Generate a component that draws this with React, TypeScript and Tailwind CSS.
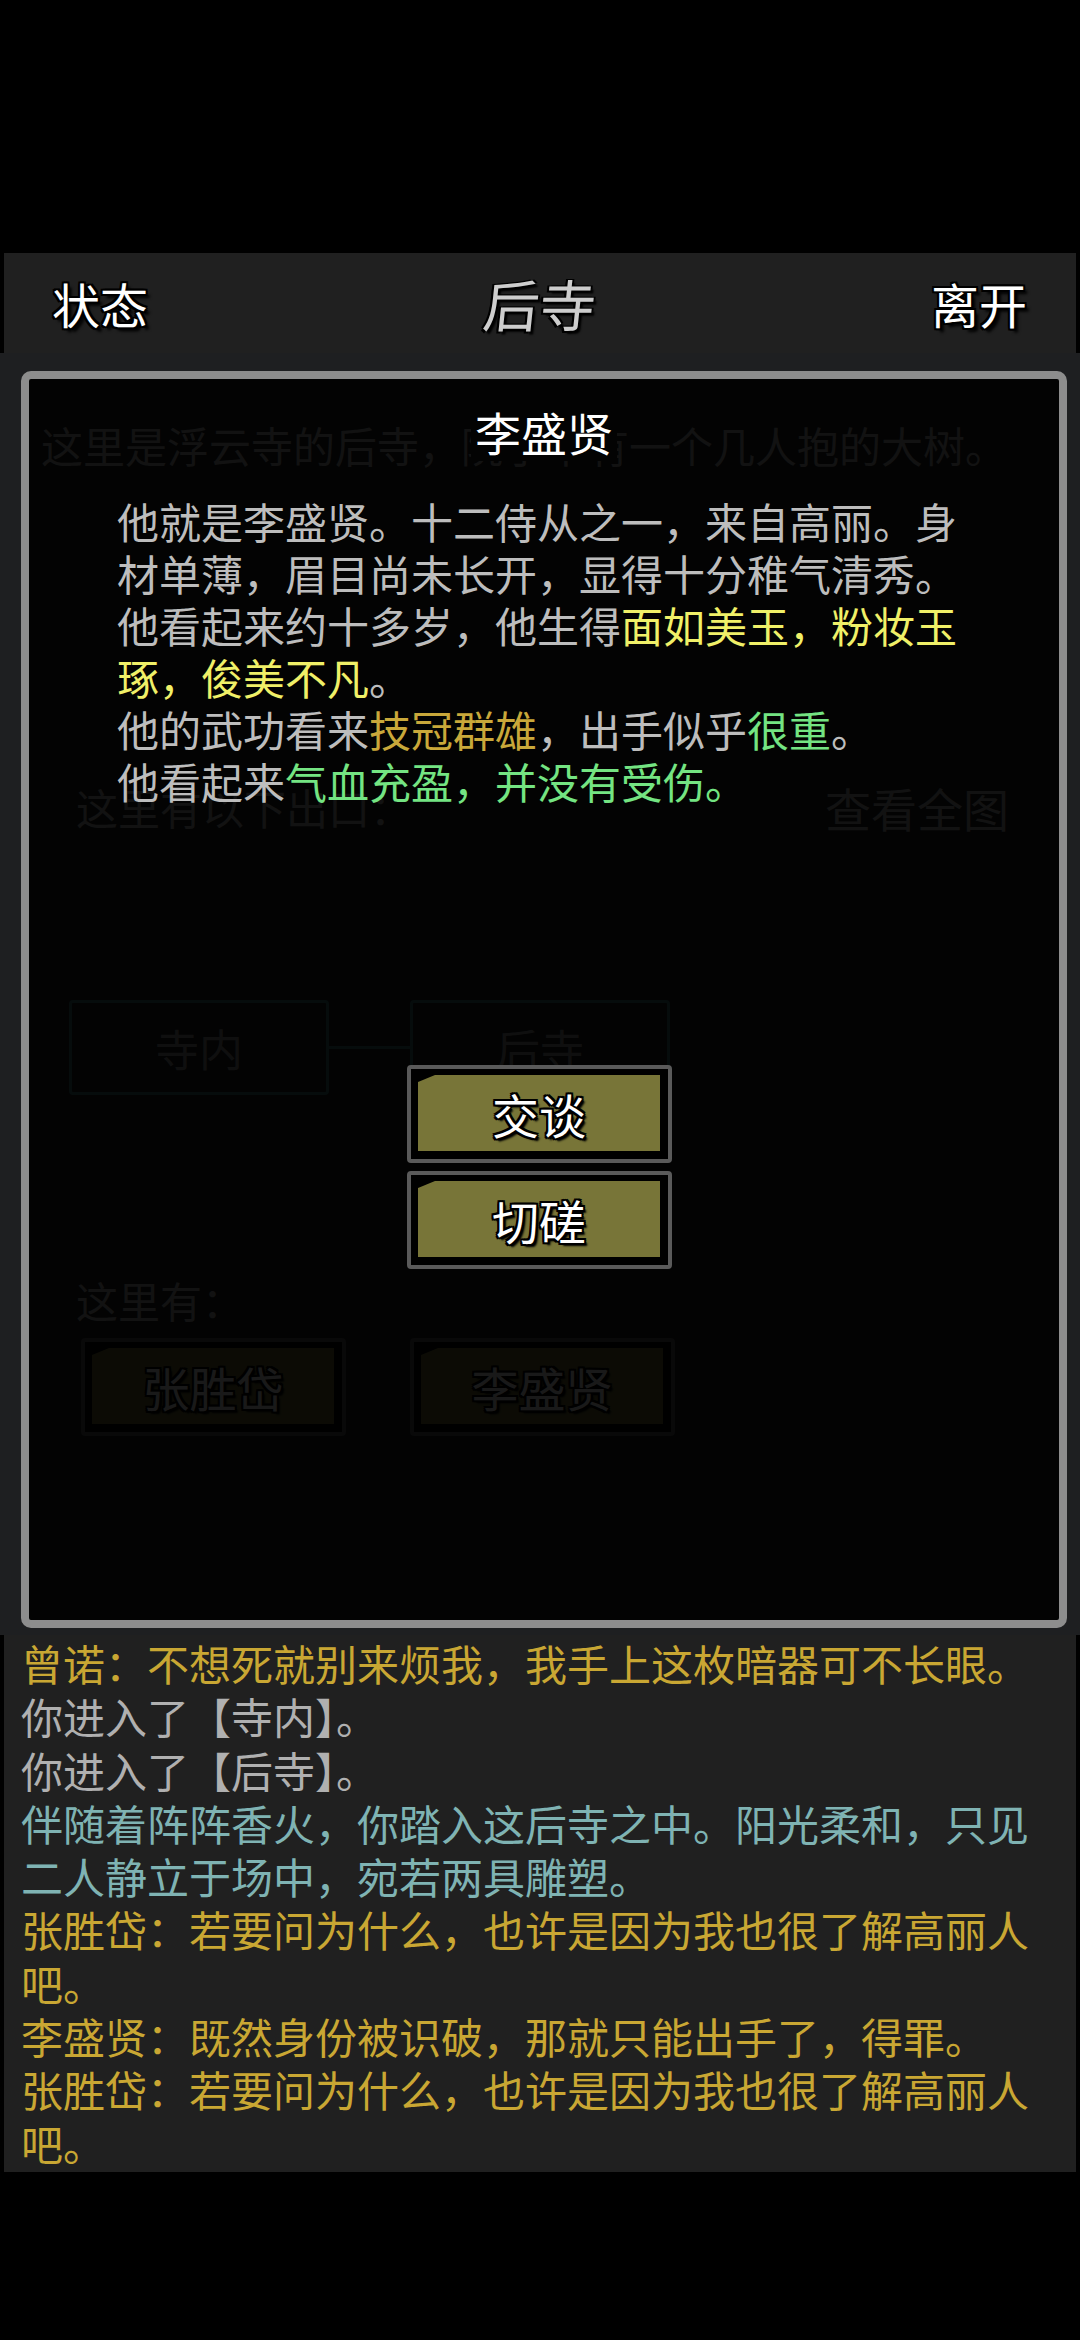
import React from 'react';

const outline =
  '[text-shadow:-2px_-2px_0_#000,2px_-2px_0_#000,-2px_2px_0_#000,2px_2px_0_#000,0_-2px_0_#000,0_2px_0_#000,-2px_0_0_#000,2px_0_0_#000,4px_4px_3px_#000]';

function ActionButton({ label }: { label: string }) {
  return (
    <div className="w-[265px] h-[98px] rounded-[4px] border-[4px] border-[#5a5a5a] bg-black pt-[6px] pl-[7px] pr-[8px] pb-[8px]">
      <div className="w-full h-full bg-[#787538] [clip-path:polygon(17px_0,100%_0,100%_100%,0_100%,0_7px)] flex items-center justify-center">
        <span className="text-[47px] leading-none text-white [text-shadow:-2px_-2px_0_#000,2px_-2px_0_#000,-2px_2px_0_#000,2px_2px_0_#000,0_-2px_0_#000,0_2px_0_#000,-2px_0_0_#000,2px_0_0_#000,3px_3px_2px_#000]">
          {label}
        </span>
      </div>
    </div>
  );
}

function MapNode({ label }: { label: string }) {
  return (
    <div className="w-[260px] h-[95px] border-[3px] border-[#3f7d7d] rounded-[4px] flex items-center justify-center text-[44px] text-[#9a9a9a]">
      {label}
    </div>
  );
}

export default function App() {
  return (
    <div className="w-[1080px] h-[2340px] bg-black flex flex-col font-['Noto_Sans_CJK_SC','Noto_Sans',sans-serif]">
      <div className="h-[253px] shrink-0" />

      {/* Header */}
      <header className="mx-[4px] h-[100px] shrink-0 bg-[#202020] grid grid-cols-3 items-center pl-[48px] pr-[49px]">
        <span className={`justify-self-start text-[48px] leading-none text-white ${outline}`}>状态</span>
        <span className="justify-self-center text-[56px] leading-none text-[#cdcdcd] [text-shadow:-2px_-1px_0_#000,2px_-1px_0_#000,-2px_2px_0_#000,3px_3px_2px_#000] -skew-x-6">
          后寺
        </span>
        <span className={`justify-self-end text-[48px] leading-none text-white ${outline}`}>离开</span>
      </header>

      {/* Room page (under the popup) */}
      <main className="relative h-[1282px] shrink-0 bg-[#1e1f21]">
        <div className="px-[41px] pt-[66px] text-[42px] leading-[52px] text-[#b4b4b4]">
          <p>这里是浮云寺的后寺，院子中有一个几人抱的大树。</p>

          <div className="mt-[310px] flex items-center justify-between pl-[35px] pr-[30px]">
            <span>这里有以下出口：</span>
            <span className="text-[46px]">查看全图</span>
          </div>

          <div className="mt-[167px] ml-[28px] flex items-center">
            <MapNode label="寺内" />
            <div className="w-[81px] h-[3px] bg-[#3f7d7d]" />
            <MapNode label="后寺" />
          </div>

          <p className="mt-[179px] pl-[35px]">这里有：</p>

          <div className="mt-[12px] ml-[40px] flex gap-[64px]">
            <ActionButton label="张胜岱" />
            <ActionButton label="李盛贤" />
          </div>
        </div>

        {/* Popup */}
        <div className="absolute left-[21px] right-[13px] top-[18px] bottom-[7px] rounded-[10px] border-[8px] border-[#8d8d8d] bg-black/[0.9] flex flex-col items-center">
          <h2 className="mt-[22px] px-[4px] bg-[#030303] text-[46px] leading-[60px] text-white">李盛贤</h2>

          <div className="mt-[34px] w-full px-[88px] text-[42px] leading-[52px] text-[#bdbdbd]">
            <p>他就是李盛贤。十二侍从之一，来自高丽。身材单薄，眉目尚未长开，显得十分稚气清秀。</p>
            <p>
              他看起来约十多岁，他生得<span className="text-[#f0f068]">面如美玉，粉妆玉琢，俊美不凡</span>。
            </p>
            <p>
              他的武功看来<span className="text-[#c9a83a]">技冠群雄</span>，出手似乎
              <span className="text-[#74e482]">很重</span>。
            </p>
            <p>
              他看起来<span className="text-[#74e482]">气血充盈，并没有受伤。</span>
            </p>
          </div>

          <div className="mt-[258px] mr-[9px] flex flex-col gap-[8px]">
            <ActionButton label="交谈" />
            <ActionButton label="切磋" />
          </div>
        </div>
      </main>

      {/* Message log */}
      <section className="mx-[4px] h-[537px] shrink-0 bg-[#202020] px-[17px] pt-[1px] text-[42px] leading-[53.3px]">
        <p className="text-[#c9a733]">曾诺：不想死就别来烦我，我手上这枚暗器可不长眼。</p>
        <p className="text-[#b0b0b0]">你进入了【寺内】。</p>
        <p className="text-[#b0b0b0]">你进入了【后寺】。</p>
        <p className="text-[#7fb3b3]">伴随着阵阵香火，你踏入这后寺之中。阳光柔和，只见二人静立于场中，宛若两具雕塑。</p>
        <p className="text-[#c9a733]">张胜岱：若要问为什么，也许是因为我也很了解高丽人吧。</p>
        <p className="text-[#c9a733]">李盛贤：既然身份被识破，那就只能出手了，得罪。</p>
        <p className="text-[#c9a733]">张胜岱：若要问为什么，也许是因为我也很了解高丽人吧。</p>
      </section>
    </div>
  );
}
